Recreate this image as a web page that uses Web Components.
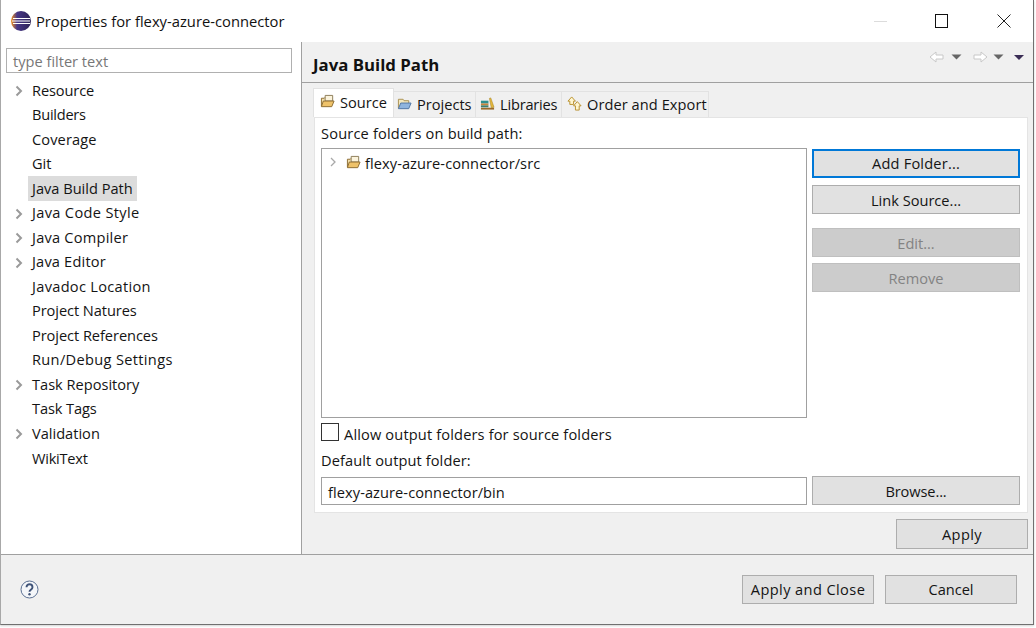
<!DOCTYPE html>
<html><head><meta charset="utf-8"><style>
html,body{margin:0;padding:0;background:#fff;height:100%;overflow:hidden}
body{font:14.6px/20px "Open Sans","Noto Sans",sans-serif;color:#141414}
</style></head><body>
<x-dialog>
  <x-titlebar slot="title">Properties for flexy-azure-connector</x-titlebar>
  <x-nav slot="nav">
    <x-item exp style="letter-spacing:-.12px">Resource</x-item><x-item style="letter-spacing:-.25px">Builders</x-item><x-item style="letter-spacing:.12px">Coverage</x-item><x-item>Git</x-item>
    <x-item sel>Java Build Path</x-item><x-item exp style="letter-spacing:.33px">Java Code Style</x-item><x-item exp style="letter-spacing:.23px">Java Compiler</x-item>
    <x-item exp style="letter-spacing:.18px">Java Editor</x-item><x-item style="letter-spacing:.3px">Javadoc Location</x-item><x-item style="letter-spacing:-.07px">Project Natures</x-item>
    <x-item style="letter-spacing:-.06px">Project References</x-item><x-item style="letter-spacing:.33px">Run/Debug Settings</x-item><x-item exp>Task Repository</x-item>
    <x-item style="letter-spacing:-.1px">Task Tags</x-item><x-item exp>Validation</x-item><x-item style="letter-spacing:-.25px">WikiText</x-item>
  </x-nav>
  <x-page slot="page">
    <x-tabs slot="tabs">
      <x-tab active icon="source" style="width:81px;padding-left:6px">Source</x-tab><x-tab icon="projects" style="width:82px;padding-left:3px">Projects</x-tab><x-tab icon="libraries" style="width:86px;letter-spacing:-.2px">Libraries</x-tab><x-tab icon="order" style="width:147px;padding-left:5px;letter-spacing:.07px">Order and Export</x-tab>
    </x-tabs>
    <x-btn slot="apply" wide style="letter-spacing:.4px">Apply</x-btn>
  </x-page>
  <x-footer slot="footer"></x-footer>
</x-dialog>
<script>
const def=(n,html,init)=>customElements.define(n,class extends HTMLElement{
  constructor(){super();this.attachShadow({mode:'open'}).innerHTML=typeof html==='function'?html(this):html}
  connectedCallback(){if(init)init(this)}
});
const ICONS={
 source:`<path d="M1.500 13V4.500h3l1-1h1" fill="#f3dfa8" stroke="#8a6a30"/><path d="M5.500 1.500h8v6h-8z" fill="#fbf3dc" stroke="#8a7a55"/><path d="M1.500 13.500l2-6h11.500l-2.500 6z" fill="#eec26a" stroke="#8a6a30"/>`,
 projects:`<path d="M1.500 13V3.500h5l1 1.500h5v2.500" fill="#f3e7bd" stroke="#a98f4f"/><path d="M1.500 13.500l2.500-6h11l-2.500 6z" fill="#8fb4de" stroke="#4f74a2"/>`,
 libraries:`<path d="M1 13.500h14" stroke="#9a6a2a" stroke-width="2"/><path d="M1 5h8v3H1z" fill="#2f8f8f"/><path d="M1 8h8v2H1z" fill="#c9843a"/><path d="M1 10h8v2H1z" fill="#3f7f6f"/><path d="M10 2.500l1.500-.5 3.500 10-3 .5z" fill="#e6b93c" stroke="#9a7a20" stroke-width=".5"/>`,
 order:`<path d="M5 1L9 5.500H7V9H3V5.500H1z" fill="#fff6d0" stroke="#b78f2c"/><path d="M11 6l4 4.500h-2V15H9v-4.500H7z" fill="#fff6d0" stroke="#b78f2c"/>`
};
def('x-dialog',`<style>
:host{display:grid;grid-template-columns:301px 1fr;grid-template-rows:42px 512px 70px;width:1034px;height:625px;box-sizing:border-box;
border-left:1px solid #a8a8a8;border-right:1px solid #707070;border-bottom:1px solid #707070;background:#f0f0f0;box-shadow:0 1px 2px rgba(0,0,0,.18)}
.t{grid-column:1/3}.n{background:#fff;border-right:1px solid #a0a0a0}.p{min-width:0}.f{grid-column:1/3;border-top:1px solid #a0a0a0;min-height:0}
</style><div class="t"><slot name="title"></slot></div><div class="n"><slot name="nav"></slot></div><div class="p"><slot name="page"></slot></div><div class="f"><slot name="footer"></slot></div>`);
def('x-titlebar',`<style>
:host{display:flex;align-items:center;height:42px;background:#fff;padding:0 22px 0 9px;box-sizing:border-box;font-size:14.75px;color:#111}
.l{flex:none;margin:0 4px 0 0}.s{flex:1;white-space:nowrap}
.c{display:flex;align-items:center}
.m{width:13px;height:1px;background:#dcdcdc;margin-right:48px}
.x{width:14px;height:14px;display:block}.b{margin-right:49px;width:13px;height:14px;border:1px solid #111;box-sizing:border-box}
</style>
<svg class="l" width="22" height="20" viewBox="0 0 22 20"><defs><linearGradient id="g" x1="0" x2="1"><stop offset="0" stop-color="#f7941e"/><stop offset=".3" stop-color="#473788"/><stop offset="1" stop-color="#2c2255"/></linearGradient></defs><circle cx="11" cy="10" r="10" fill="url(#g)"/><path d="M3 7.500h17M2 10h18M3 12.500h17" stroke="#fff" stroke-width="1.100"/></svg>
<span class="s"><slot></slot></span>
<div class="c"><span class="m"></span><span class="b"></span><svg class="x" viewBox="0 0 14 14"><path d="M.5.5l13 13M13.500.5l-13 13" stroke="#222" fill="none"/></svg></div>`);
def('x-nav',`<style>
:host{display:block;padding:6px 8px 0 5px}
.i{display:block;height:25px;border:1px solid #b0b0b0;box-sizing:border-box;font-size:14.6px;color:#777;line-height:25px;padding-left:6px;margin-bottom:5px;width:286px}
.l{display:block}
</style><div class="i">type filter text</div><div class="l"><slot></slot></div>`);
def('x-item',h=>`<style>
:host{display:flex;align-items:center;height:24.53px;position:relative;padding-left:22px;font-size:14.6px;white-space:nowrap;color:#141414}
.t{padding:0 4px;line-height:25px;height:25px}
:host([sel]) .t{background:#dcdcdc}
svg{position:absolute;left:8px;top:7px}
</style>${h.hasAttribute('exp')?'<svg width="11" height="12" viewBox="0 0 11 12"><path d="M2.500 1.500L7 6l-4.500 4.500" fill="none" stroke="#9a9a9a" stroke-width="2"/></svg>':''}<span class="t"><slot></slot></span>`);
def('x-page',`<style>
:host{display:flex;flex-direction:column;height:512px;box-sizing:border-box;font-size:14.6px}
h2{margin:0;box-sizing:border-box;font:700 16.8px/45px "Open Sans","Noto Sans",sans-serif;padding-left:11px;color:#111;border-bottom:1px solid #a0a0a0;height:41px;display:flex;justify-content:space-between}
.nav{display:flex;align-items:center;margin:2px 9px 0 0;height:26px}
.tabs{padding:5px 4px 0 11px;height:29px}
.panel{box-sizing:border-box;margin:0 5px 0 12px;height:396px;background:#fff;border:1px solid #e4e4e4;padding:6px 6px 7px 6px;display:grid;grid-template-columns:486px 208px;column-gap:5px;grid-template-rows:20px 270px 1fr;align-content:start}
.lab{grid-column:1/3;line-height:22px;margin-top:-2px;letter-spacing:.18px}
.tree{border:1px solid #a0a0a0;margin-top:4px;height:270px;box-sizing:border-box;display:flex;align-items:flex-start;padding:4px 0 0 6px;white-space:nowrap;letter-spacing:.08px}
.tree svg{flex:none}
.btns{display:flex;flex-direction:column;margin-top:5px}
.opt{grid-column:1/3;margin-top:10px;display:grid;grid-template-columns:486px 208px;column-gap:5px}
.ck{grid-column:1/3;display:flex;align-items:center;height:18px;margin-top:-1px;letter-spacing:.15px}
.ck i{display:block;width:18px;height:18px;border:1px solid #333;box-sizing:border-box;margin-right:5px}
.ck span{position:relative;top:2px}
.dl{grid-column:1/3;height:20px;margin-top:9px;line-height:20px;letter-spacing:.1px}
.in{border:1px solid #a0a0a0;height:28px;box-sizing:border-box;line-height:28px;padding-left:6px;margin-top:7px;letter-spacing:.08px}
.foot{flex:1;display:flex;justify-content:flex-end;padding:6px 5px 0 0;box-sizing:border-box}
</style>
<h2><span>Java Build Path</span><span class="nav">
<svg width="16" height="14" viewBox="0 0 16 14"><path d="M1 7l6-5v3h7v4H7v3z" fill="#fff" stroke="#c8c8c8"/></svg>
<svg style="margin-left:6px" width="11" height="6" viewBox="0 0 11 6"><path d="M.5.500h10L5.500 5.500z" fill="#666"/></svg>
<svg style="margin-left:10px" width="16" height="14" viewBox="0 0 16 14"><path d="M15 7l-6-5v3H2v4h7v3z" fill="#fff" stroke="#c8c8c8"/></svg>
<svg style="margin-left:5px" width="11" height="6" viewBox="0 0 11 6"><path d="M.5.500h10L5.500 5.500z" fill="#666"/></svg>
<svg style="margin-left:10px" width="10" height="5" viewBox="0 0 10 5"><path d="M0 0h10L5 5z" fill="#3a2d55"/></svg>
</span></h2>
<div class="tabs"><slot name="tabs"></slot></div>
<div class="panel">
 <div class="lab">Source folders on build path:</div>
 <div class="tree"><svg width="11" height="12" viewBox="0 0 11 12" style="margin-top:3px;margin-right:6px"><path d="M3 2l4 4-4 4" fill="none" stroke="#a8a8a8" stroke-width="1.300"/></svg><svg width="15" height="15" viewBox="0 0 16 16" style="margin:2px 4px 0 1px">${ICONS.source}</svg>flexy-azure-connector/src</div>
 <div class="btns"><x-btn focus style="letter-spacing:.2px">Add Folder...</x-btn><x-btn style="margin-top:7px;padding-bottom:0">Link Source...</x-btn><x-btn dis style="margin-top:14px;padding-bottom:0">Edit...</x-btn><x-btn dis style="margin-top:6px;padding-bottom:0">Remove</x-btn></div>
 <div class="opt">
   <div class="ck"><i></i><span>Allow output folders for source folders</span></div>
   <div class="dl">Default output folder:</div>
   <div class="in">flexy-azure-connector/bin</div>
   <x-btn style="margin-top:6px;padding-bottom:0;letter-spacing:-.1px">Browse...</x-btn>
 </div>
</div>
<div class="foot"><slot name="apply"></slot></div>`);
def('x-tabs',`<style>:host{display:flex;align-items:flex-end;height:29px}</style><slot></slot>`);
def('x-tab',h=>`<style>
:host{display:flex;align-items:center;box-sizing:border-box;height:26px;padding:0 0 2px 4px;background:#f0f0f0;border:1px solid #e2e2e2;border-bottom:0;border-left:0;font-size:14.6px;white-space:nowrap;color:#141414}
:host([active]){height:29px;background:#fff;border-left:1px solid #e2e2e2;padding:0 0 3px 6px}
svg{flex:none;margin-right:5px}
</style><svg width="15" height="15" viewBox="0 0 16 16">${ICONS[h.getAttribute('icon')]}</svg><slot></slot>`);
def('x-btn',`<style>
:host{display:flex;align-items:center;justify-content:center;box-sizing:border-box;height:29px;background:#e1e1e1;border:1px solid #adadad;font-size:14.6px;color:#141414;white-space:nowrap;padding-bottom:1px}
:host([focus]){border:2px solid #0078d7}
:host([dis]){background:#cccccc;border-color:#bfbfbf;color:#838383}
:host([wide]){width:132px;height:30px}
:host([foot]){width:132px;height:29px}
</style><slot></slot>`);
def('x-footer',`<style>
:host{display:flex;align-items:flex-start;height:69px;box-sizing:border-box;padding:20px 16px 0 19px;gap:11px}
svg{margin:5px auto 0 0}
</style><svg width="19" height="19" viewBox="0 0 19 19"><circle cx="9.500" cy="9.500" r="8.500" fill="#f4f6f9" stroke="#5a6f92"/><path d="M6.500 7.300c0-4 6-4 6 0 0 2.500-3 2.500-3 4.500" fill="none" stroke="#3f5378" stroke-width="1.900"/><circle cx="9.500" cy="14.300" r="1.200" fill="#3f5378"/></svg><x-btn foot style="letter-spacing:.4px">Apply and Close</x-btn><x-btn foot>Cancel</x-btn>`);
</script>
</body></html>
